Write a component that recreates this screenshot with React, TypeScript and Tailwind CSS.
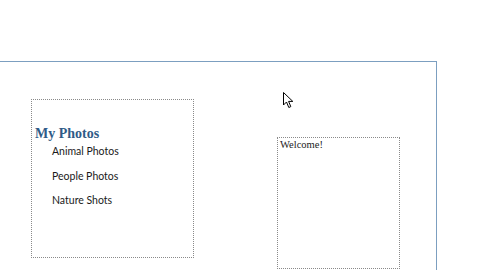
export default function App() {
  const links = ["Animal Photos", "People Photos", "Nature Shots"];

  return (
    <div className="relative w-[480px] h-[270px] overflow-hidden bg-white">
      <div className="pt-[61px]">
        <div className="w-[437px] h-[209px] border-t border-r border-[#7c9fc0] flex items-start">
          {/* left nav box */}
          <div className="ml-[31px] mt-[37px] w-[163px] h-[159px] border border-dotted border-[#8a8a8a] pl-[3px] pt-[25px]">
            <div className="text-[14px] leading-[18px] font-bold text-[#2f5b87] [font-family:'Liberation_Serif',serif]">
              My Photos
            </div>
            <ul className="pl-[17px] mt-[1px] [font-family:Lato,'Liberation_Sans',sans-serif] text-[10.5px] text-[#1a1a1a]">
              {links.map((l) => (
                <li key={l} className="h-[24.5px] leading-[14px]">
                  {l}
                </li>
              ))}
            </ul>
          </div>
          {/* welcome box */}
          <div className="ml-[83px] mt-[75px] w-[123px] h-[132px] border border-dotted border-[#8a8a8a] pl-[2px] pt-[1px]">
            <div className="text-[10.5px] leading-[12px] font-normal text-[#222] [font-family:'Liberation_Serif',serif]">
              Welcome!
            </div>
          </div>
        </div>
      </div>
      {/* mouse pointer */}
      <svg className="absolute left-[283px] top-[92px]" width="11" height="17" viewBox="0 0 11 17">
        <path
          d="M0.5 0.5 L0.5 13 L3.5 10 L5.8 15.5 L7.8 14.6 L5.6 9.4 L9.8 9.4 Z"
          fill="#fff"
          stroke="#000"
          strokeWidth="1"
          strokeLinejoin="miter"
        />
      </svg>
    </div>
  );
}
